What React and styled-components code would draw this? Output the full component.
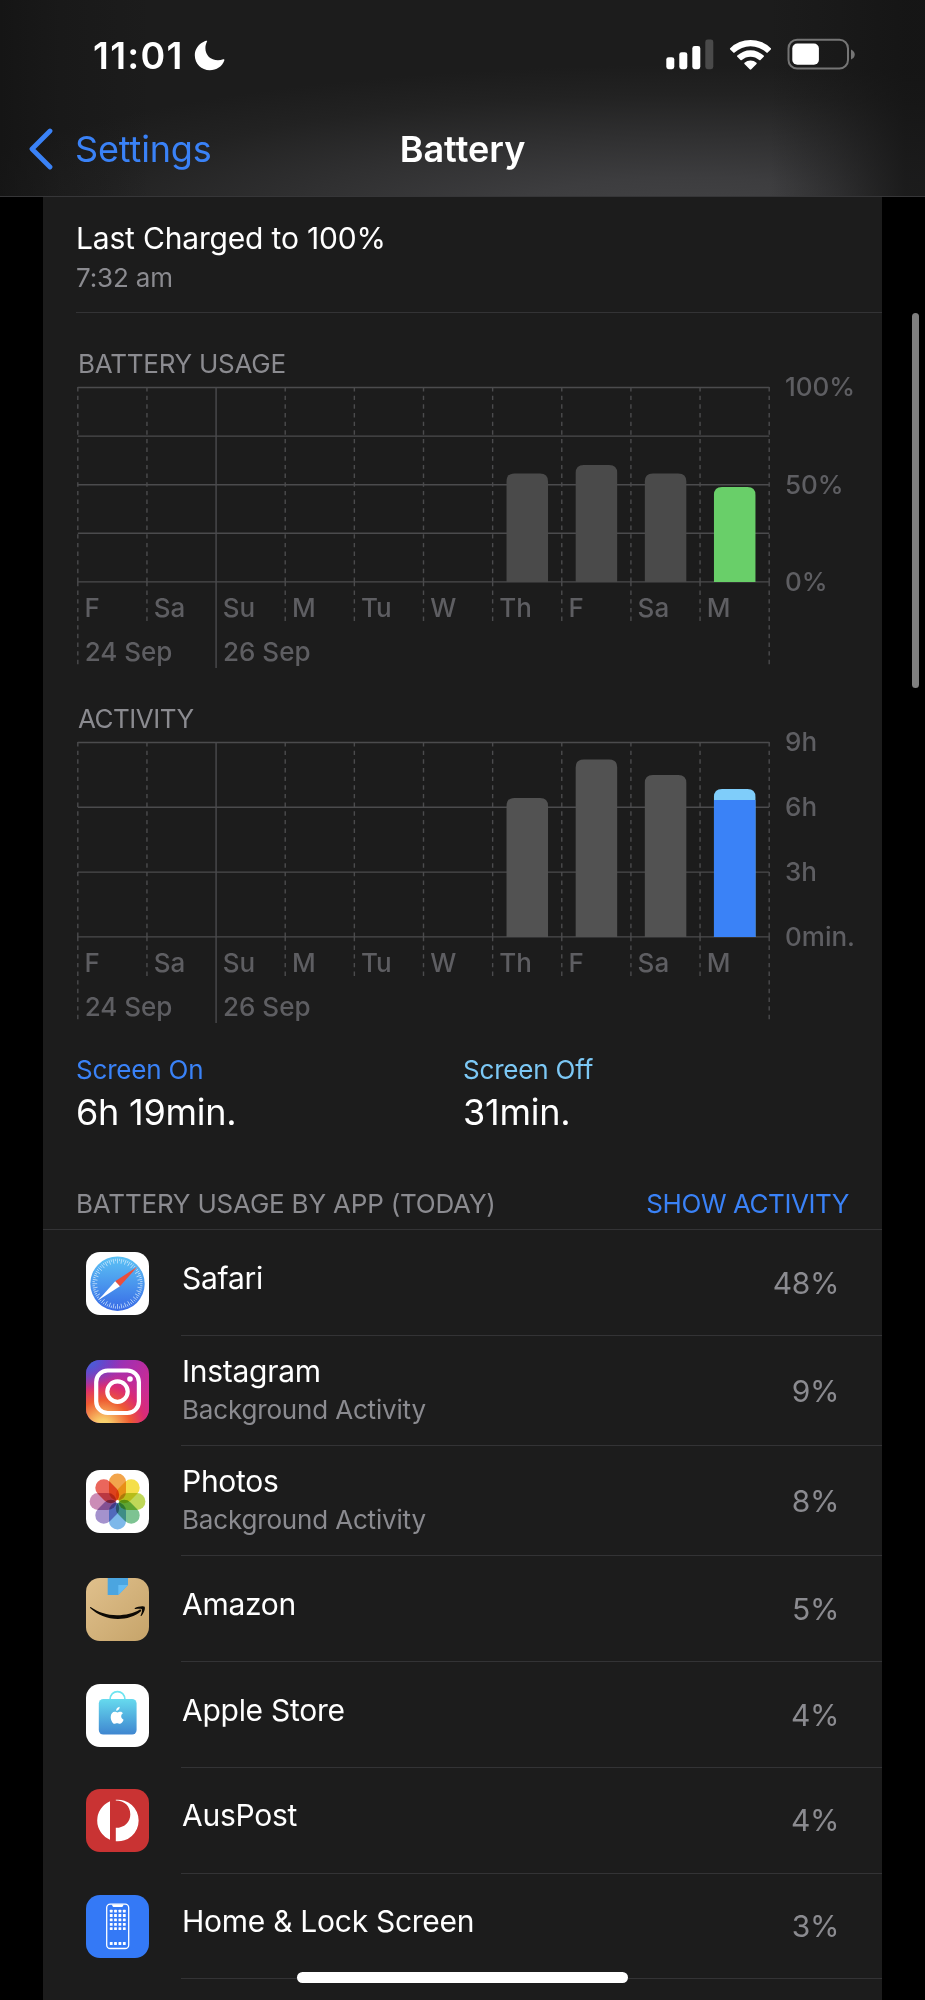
import styled, { createGlobalStyle } from "styled-components";

const colors = {
  card: "#1c1c1c",
  line: "#333335",
  grid: "#4b4b4d",
  grey: "#8b8b90",
  axis: "#5e5e62",
  blue: "#3a82f7",
  lightBlue: "#7cc8f5",
  green: "#69cf69",
};

const days = ["F", "Sa", "Su", "M", "Tu", "W", "Th", "F", "Sa", "M"];

const usageBars = [
  { day: 6, parts: [{ size: 108.5, color: "#4a4a4a" }] },
  { day: 7, parts: [{ size: 117, color: "#4a4a4a" }] },
  { day: 8, parts: [{ size: 108.5, color: "#4a4a4a" }] },
  { day: 9, parts: [{ size: 95, color: colors.green }] },
];

const activityBars = [
  { day: 6, parts: [{ size: 139, color: "#525252" }] },
  { day: 7, parts: [{ size: 177.5, color: "#525252" }] },
  { day: 8, parts: [{ size: 162, color: "#525252" }] },
  {
    day: 9,
    parts: [
      { size: 148, color: "#7fcdfa" },
      { size: 136.8, color: colors.blue },
    ],
  },
];

const apps = [
  { name: "Safari", value: "48%", icon: <SafariIcon />, height: 106 },
  { name: "Instagram", note: "Background Activity", value: "9%", icon: <InstagramIcon />, height: 110 },
  { name: "Photos", note: "Background Activity", value: "8%", icon: <PhotosIcon />, height: 110 },
  { name: "Amazon", value: "5%", icon: <AmazonIcon />, height: 106 },
  { name: "Apple Store", value: "4%", icon: <AppleStoreIcon />, height: 106 },
  { name: "AusPost", value: "4%", icon: <AusPostIcon />, height: 105.5 },
  { name: "Home & Lock Screen", value: "3%", icon: <HomeIcon />, height: 105.5 },
];

export default function App() {
  return (
    <Screen>
      <GlobalStyle />
      <Header>
        <StatusBar>
          <Clock>11:01</Clock>
          <MoonIcon />
          <Spacer />
          <StatusIcons />
        </StatusBar>
        <NavBar>
          <Back>
            <svg width="26" height="42" viewBox="0 0 26 42" fill="none">
              <path d="M22 3 L4 21 L22 39" stroke={colors.blue} strokeWidth="4.8" strokeLinecap="round" strokeLinejoin="round" />
            </svg>
            <span>Settings</span>
          </Back>
          <Title>Battery</Title>
        </NavBar>
      </Header>
      <Card>
        <LastCharged>
          <ChargedTitle>Last Charged to 100%</ChargedTitle>
          <ChargedTime>7:32 am</ChargedTime>
        </LastCharged>
        <ChartTitle>BATTERY USAGE</ChartTitle>
        <Chart rows={4} bars={usageBars} labels={["100%", "50%", "0%"]} />
        <ChartTitle $second>ACTIVITY</ChartTitle>
        <Chart rows={3} bars={activityBars} labels={["9h", "6h", "3h", "0min."]} />
        <Totals>
          <div>
            <TotalLabel $color={colors.blue}>Screen On</TotalLabel>
            <TotalValue>6h 19min.</TotalValue>
          </div>
          <div>
            <TotalLabel $color={colors.lightBlue}>Screen Off</TotalLabel>
            <TotalValue>31min.</TotalValue>
          </div>
        </Totals>
        <ListHeader>
          <span>BATTERY USAGE BY APP (TODAY)</span>
          <ShowActivity>SHOW ACTIVITY</ShowActivity>
        </ListHeader>
        {apps.map((app) => (
          <Row key={app.name} $height={app.height}>
            {app.icon}
            <RowBody>
              <RowText $single={!app.note}>
                <AppName>{app.name}</AppName>
                {app.note && <AppNote>{app.note}</AppNote>}
              </RowText>
              <Percent>{app.value}</Percent>
            </RowBody>
          </Row>
        ))}
      </Card>
      <ScrollThumb />
      <HomeIndicator />
    </Screen>
  );
}

const STEP = 69.14;
const PLOT = 194.4;

function Chart({ rows, bars, labels }) {
  const lines = Array.from({ length: rows + 1 }, (_, i) => 1.5 + (PLOT / rows) * i);
  const bottom = 1.5 + PLOT;

  return (
    <ChartRow>
      <svg width="694" height="284" viewBox="0 0 694 284">
        <g stroke={colors.grid} strokeWidth="1.4">
          {lines.map((y) => (
            <line key={y} x1="1.8" x2="693.2" y1={y} y2={y} />
          ))}
        </g>
        {Array.from({ length: 11 }, (_, i) => {
          const x = 1.8 + STEP * i;
          const solid = i === 2;
          const end = solid ? 282 : i === 0 || i === 10 ? 278.3 : 235;
          return (
            <path
              key={i}
              d={`M${x} 1 V${bottom} M${x} ${bottom} V${end}`}
              stroke={colors.grid}
              strokeWidth="1.4"
              strokeDasharray={solid ? undefined : "4.4 4.26"}
            />
          );
        })}
        {bars.map(({ day, parts }) =>
          parts.map(({ size, color }, n) => {
            const x = 1.8 + STEP * day + 13.9;
            const y = bottom - size;
            const r = n === 0 ? 8 : 0;
            return (
              <path
                key={day + color}
                d={`M${x} ${bottom} V${y + r} q0 ${-r} ${r} ${-r} H${x + 41.5 - r} q${r} 0 ${r} ${r} V${bottom} Z`}
                fill={color}
              />
            );
          })
        )}
        <AxisText>
          {days.map((d, i) => (
            <text key={i} x={8.5 + STEP * i} y="231.3">
              {d}
            </text>
          ))}
          <text x="8.7" y="274.5">24 Sep</text>
          <text x="147" y="274.5">26 Sep</text>
        </AxisText>
      </svg>
      <Scale>
        {labels.map((label) => (
          <span key={label}>{label}</span>
        ))}
      </Scale>
    </ChartRow>
  );
}

function MoonIcon() {
  return (
    <svg width="31" height="31" viewBox="0 0 31 31">
      <path d="M13 0.8 C11.6 0.8 10.6 1.3 9.3 2 C4.2 4.6 0.8 9.4 0.8 15.2 C0.8 23.7 7.4 30.2 15.8 30.2 C22.4 30.2 28.4 26.3 30.3 20.4 C30.6 19.5 30 19 29.2 19.3 C27.4 20 25.8 20.2 24 20.2 C16.6 20.2 11.4 15.2 11.4 8.2 C11.4 6 11.9 3.9 12.8 2.1 C13.1 1.5 13.4 1 13 0.8 Z" fill="#fff" />
    </svg>
  );
}

function StatusIcons() {
  return (
    <svg width="192" height="34" viewBox="0 0 192 34">
      <g fill="#fff">
        <rect x="1.3" y="19.2" width="8" height="12" rx="2.4" />
        <rect x="14.3" y="14.2" width="8" height="17" rx="2.4" />
        <rect x="27.3" y="8" width="8" height="23.2" rx="2.4" />
        <rect x="40.3" y="1.5" width="8" height="29.7" rx="2.4" fill="#4a4a4a" />
      </g>
      <g transform="translate(85.5 31)" fill="#fff">
        <path d="M-20.3 -20.8 A29.2 29.2 0 0 1 20.3 -20.8 Q20.9 -20.2 20.3 -19.6 L17.2 -16.4 Q16.6 -15.8 15.9 -16.4 A23.1 23.1 0 0 0 -15.9 -16.4 Q-16.6 -15.8 -17.2 -16.4 L-20.3 -19.6 Q-20.9 -20.2 -20.3 -20.8 Z" />
        <path d="M-13.2 -13.4 A19 19 0 0 1 13.2 -13.4 Q13.8 -12.8 13.2 -12.2 L10 -9 Q9.4 -8.4 8.7 -9 A13 13 0 0 0 -8.7 -9 Q-9.4 -8.4 -10 -9 L-13.2 -12.2 Q-13.8 -12.8 -13.2 -13.4 Z" />
        <path d="M-6 -6.2 A9.2 9.2 0 0 1 6 -6.2 Q6.6 -5.6 6 -5 L0.8 0.3 Q0 1 -0.8 0.3 L-6 -5 Q-6.6 -5.6 -6 -6.2 Z" />
      </g>
      <rect x="123.5" y="1.8" width="59.5" height="28.8" rx="8.6" fill="none" stroke="#757575" strokeWidth="2" />
      <rect x="127.3" y="5.6" width="26.6" height="21.2" rx="5" fill="#fff" />
      <path d="M186 11.4 C191 13.4 191 19.4 186 21.4 Z" fill="#757575" />
    </svg>
  );
}

function SafariIcon() {
  const ticks = Array.from({ length: 72 }, (_, i) => i * 5);
  return (
    <Icon>
      <defs>
        <linearGradient id="safari" x1="0" y1="0" x2="0" y2="1">
          <stop offset="0" stopColor="#5cc3f5" />
          <stop offset="1" stopColor="#386ae6" />
        </linearGradient>
      </defs>
      <rect width="63" height="63" fill="#fff" />
      <circle cx="31.5" cy="31.7" r="27.2" fill="url(#safari)" />
      <g stroke="#d5eafc" strokeWidth="0.7">
        {ticks.map((a, i) => (
          <line key={a} x1="31.5" x2="31.5" y1="6.6" y2={i % 2 ? 9 : 11.4} transform={`rotate(${a} 31.5 31.7)`} />
        ))}
      </g>
      <path d="M51.5 14.6 L33.9 34.3 L29.2 29.2 Z" fill="#ea4e3d" />
      <path d="M12.2 48.3 L29.2 29.2 L33.9 34.3 Z" fill="#fff" />
    </Icon>
  );
}

function InstagramIcon() {
  return (
    <Icon>
      <defs>
        <linearGradient id="igBase" x1="0" y1="0" x2="1" y2="0.6">
          <stop offset="0" stopColor="#5b45d0" />
          <stop offset="0.5" stopColor="#a42fb0" />
          <stop offset="1" stopColor="#d42a8c" />
        </linearGradient>
        <radialGradient id="igWarm" cx="0.27" cy="1.07" r="0.98">
          <stop offset="0" stopColor="#fbd975" />
          <stop offset="0.12" stopColor="#f9cf6b" />
          <stop offset="0.45" stopColor="#ee5b32" />
          <stop offset="0.68" stopColor="#dc2c72" />
          <stop offset="1" stopColor="#c22d9c" stopOpacity="0" />
        </radialGradient>
        <radialGradient id="igCool" cx="0.05" cy="0" r="0.5">
          <stop offset="0" stopColor="#4265dc" />
          <stop offset="1" stopColor="#6b3fca" stopOpacity="0" />
        </radialGradient>
      </defs>
      <rect width="63" height="63" fill="url(#igBase)" />
      <rect width="63" height="63" fill="url(#igWarm)" />
      <rect width="63" height="63" fill="url(#igCool)" />
      <g fill="none" stroke="#fff" strokeWidth="4.2">
        <rect x="10.2" y="10.5" width="42.7" height="42.5" rx="11.5" />
        <circle cx="31.5" cy="31.6" r="10.2" />
      </g>
      <circle cx="44" cy="19" r="2.8" fill="#fff" />
    </Icon>
  );
}

const petals = ["#f19b38", "#f4dc35", "#b8d446", "#6fbd86", "#6fb0e8", "#9a86c8", "#c67fae", "#e8554a"];

function PhotosIcon() {
  return (
    <Icon>
      <rect width="63" height="63" fill="#fff" />
      <g>
        {petals.map((color, i) => (
          <Petal key={color} x="23" y="3.6" width="17" height="26.8" rx="8.5" fill={color} transform={`rotate(${i * 45} 31.5 31.5)`} />
        ))}
      </g>
      <circle cx="31.5" cy="31.5" r="1.6" fill="#fff" />
    </Icon>
  );
}

function AmazonIcon() {
  return (
    <Icon>
      <defs>
        <linearGradient id="amazon" x1="0" y1="0" x2="1" y2="1">
          <stop offset="0" stopColor="#e0c08c" />
          <stop offset="1" stopColor="#c6a46a" />
        </linearGradient>
      </defs>
      <rect width="63" height="63" fill="url(#amazon)" />
      <path d="M21.7 0 H42 V7 L32.3 17 H21.7 Z" fill="#4ba5e0" />
      <path d="M32.3 17 V7 H42 Z" fill="#65bdf3" />
      <path d="M4.6 29 C12 34.3 21 37.2 31 37.2 C39.5 37.2 48 35 53.5 31.7 C55 31 56 32.5 54.7 33.5 C49 38.3 40.5 41 32 41 C21 41 11.5 36.6 4.4 30.2 C3.8 29.6 4 28.7 4.6 29 Z" fill="#0d0a05" />
      <path d="M49 30 C51.5 28.4 57.5 27.6 58.6 28.8 C59.7 30.2 57.8 35.6 55.6 37.8 C54.9 38.4 54.3 38 54.7 37.2 C55.6 35 56.5 32 55.8 31.2 C55.1 30.4 52 30.7 49.6 31 C48.6 31.1 48.4 30.4 49 30 Z" fill="#0d0a05" />
    </Icon>
  );
}

function AppleStoreIcon() {
  return (
    <Icon>
      <defs>
        <linearGradient id="bag" x1="0" y1="0" x2="0" y2="1">
          <stop offset="0" stopColor="#66daee" />
          <stop offset="1" stopColor="#3f86d0" />
        </linearGradient>
      </defs>
      <rect width="63" height="63" fill="#fff" />
      <path d="M24 16 C24 4.8 39 4.8 39 16" fill="none" stroke="#6fe4f0" strokeWidth="1.7" />
      <rect x="12.8" y="15" width="37.8" height="35.6" rx="4.5" fill="url(#bag)" />
      <g transform="translate(24.7 22.8) scale(0.82)" fill="#fff">
        <path d="M11 0 C11.2 2.6 9 5 6.6 4.9 C6.4 2.4 8.6 0.2 11 0 Z" />
        <path d="M14.9 8 C11.7 10 12.3 14.4 15.7 15.7 C15 17.8 12.9 20.8 11 20.8 C9.7 20.8 9.4 20 7.8 20 C6.2 20 5.7 20.8 4.5 20.8 C2.4 20.8 0 16.2 0 12.4 C0 8.4 2.5 6 4.9 6 C6.4 6 7.2 6.9 8.4 6.9 C9.5 6.9 10.3 6 12 6 C13.2 6 14.3 6.8 14.9 8 Z" />
      </g>
    </Icon>
  );
}

function AusPostIcon() {
  return (
    <Icon>
      <rect width="63" height="63" fill="#c93333" />
      <path d="M24 12.3 A20.8 20.8 0 0 0 24 50.7 Z" fill="#fff" />
      <path d="M29.8 10.8 A20.8 20.8 0 1 1 29.8 52.2 V38.8 C38.5 38.8 44.3 33 44.3 25.4 C44.3 17 38.3 11.8 29.8 11.6 Z" fill="#fff" />
    </Icon>
  );
}

function HomeIcon() {
  const dots = [16, 20.4, 24.8, 29.2, 33.6, 48.4];
  return (
    <Icon>
      <rect width="63" height="63" fill="#3479f6" />
      <rect x="20.7" y="9.2" width="22" height="44.3" rx="3.6" fill="none" stroke="#fff" strokeWidth="1.3" />
      <path d="M26 9.5 H37.5 C37 11.4 36.5 12 35.4 12 H28 C27 12 26.4 11.4 26 9.5 Z" fill="#fff" />
      <g fill="#fff">
        {dots.map((y) =>
          [25.2, 29.5, 33.9, 38.3].map((x) => (
            <rect key={x} x={x - 1.4} y={y - 1.3} width="2.8" height="2.8" rx="0.5" />
          ))
        )}
      </g>
    </Icon>
  );
}

const GlobalStyle = createGlobalStyle`
  body {
    margin: 0;
    background: #000;
    font-family: Inter, "Liberation Sans", sans-serif;
    color: #fff;
  }

  svg {
    display: block;
    flex: none;
  }
`;

const Screen = styled.div`
  position: relative;
  width: 925px;
  height: 2000px;
  overflow: hidden;
  background: #000;
`;

const Header = styled.header`
  box-sizing: border-box;
  height: 197px;
  padding-top: 31px;
  border-bottom: 1px solid #363638;
  background:
    linear-gradient(90deg, rgba(18, 18, 18, 0.7) 0, rgba(18, 18, 18, 0.3) 60px, rgba(18, 18, 18, 0) 150px, rgba(18, 18, 18, 0) 770px, rgba(20, 20, 20, 0.35) 835px, rgba(20, 20, 20, 0.8) 905px),
    radial-gradient(ellipse 760px 150px at 690px 215px, #434345 0%, #3d3d3f 25%, #303031 52%, #222222 80%, #1c1c1c 100%);
`;

const StatusBar = styled.div`
  display: flex;
  align-items: center;
  height: 48px;
  padding: 0 68px 0 93px;
`;

const Clock = styled.span`
  width: 101px;
  font-size: 37.5px;
  font-weight: 600;
  letter-spacing: 1.3px;
  white-space: nowrap;
`;

const Spacer = styled.div`
  flex: 1;
`;

const NavBar = styled.nav`
  display: grid;
  grid-template-columns: 1fr auto 1fr;
  align-items: center;
  height: 48px;
  margin-top: 46px;
`;

const Back = styled.div`
  display: flex;
  align-items: center;
  gap: 21px;
  padding-left: 28px;
  font-size: 36px;
  letter-spacing: -0.15px;
  color: ${colors.blue};
`;

const Title = styled.h1`
  margin: 0;
  font-size: 36px;
  font-weight: 600;
  letter-spacing: 0;
`;

const Card = styled.main`
  width: 839px;
  height: 1803px;
  margin-left: 43px;
  background: ${colors.card};
`;

const LastCharged = styled.section`
  box-sizing: border-box;
  height: 116px;
  margin-left: 33px;
  padding-top: 22px;
  border-bottom: 1px solid ${colors.line};
`;

const ChargedTitle = styled.div`
  font-size: 30px;
  line-height: 38px;
  letter-spacing: -0.18px;
`;

const ChargedTime = styled.div`
  margin-top: 5px;
  font-size: 26px;
  line-height: 32px;
  letter-spacing: -0.15px;
  color: ${colors.grey};
`;

const ChartTitle = styled.h2`
  height: 32px;
  margin: ${(p) => (p.$second ? "32px" : "35px")} 0 0 35px;
  padding-bottom: 6px;
  font-size: 26px;
  font-weight: 400;
  line-height: 32px;
  letter-spacing: ${(p) => (p.$second ? "-0.5px" : "-0.25px")};
  color: ${colors.grey};
`;

const ChartRow = styled.div`
  display: flex;
  gap: 15px;
  height: 285px;
  padding-left: 33px;
`;

const AxisText = styled.g`
  fill: ${colors.axis};
  font-size: 26px;
  font-weight: 500;
`;

const Scale = styled.div`
  display: flex;
  flex-direction: column;
  justify-content: space-between;
  height: 227px;
  margin-top: -15px;
  font-size: 26px;
  font-weight: 500;
  line-height: 32px;
  color: ${colors.axis};
`;

const Totals = styled.section`
  display: grid;
  grid-template-columns: 387px 1fr;
  padding: 28px 0 0 33px;
`;

const TotalLabel = styled.div`
  font-size: 26px;
  line-height: 32px;
  letter-spacing: -0.18px;
  color: ${(p) => p.$color};
`;

const TotalValue = styled.div`
  margin-top: 4px;
  font-size: 36px;
  line-height: 44px;
  letter-spacing: -0.25px;
`;

const ListHeader = styled.div`
  box-sizing: border-box;
  display: flex;
  justify-content: space-between;
  height: 96px;
  padding: 54px 33px 0 33px;
  border-bottom: 1px solid ${colors.line};
  font-size: 26px;
  line-height: 32px;
  letter-spacing: -0.2px;
  color: ${colors.grey};
`;

const ShowActivity = styled.span`
  letter-spacing: -0.45px;
  color: ${colors.blue};
`;

const Row = styled.div`
  display: flex;
  align-items: center;
  height: ${(p) => p.$height}px;
  padding-left: 43px;
`;

const Icon = styled.svg.attrs({ viewBox: "0 0 63 63" })`
  width: 63px;
  height: 63px;
  border-radius: 14px;
`;

const Petal = styled.rect`
  mix-blend-mode: multiply;
  opacity: 0.9;
`;

const RowBody = styled.div`
  box-sizing: border-box;
  flex: 1;
  display: flex;
  align-items: center;
  justify-content: space-between;
  height: 100%;
  margin-left: 32px;
  padding-right: 43px;
  border-bottom: 1px solid ${colors.line};
`;

const RowText = styled.div`
  padding-left: 1px;
  padding-bottom: ${(p) => (p.$single ? "10px" : "4px")};
`;

const AppName = styled.div`
  font-size: 30px;
  line-height: 38px;
  letter-spacing: -0.27px;
`;

const AppNote = styled.div`
  margin-top: 4px;
  font-size: 26px;
  line-height: 32px;
  letter-spacing: -0.17px;
  color: ${colors.grey};
`;

const Percent = styled.span`
  font-size: 30px;
  letter-spacing: -0.4px;
  color: ${colors.grey};
`;

const ScrollThumb = styled.div`
  position: absolute;
  top: 313px;
  right: 6px;
  width: 7px;
  height: 375px;
  border-radius: 4px;
  background: #7f7f7f;
`;

const HomeIndicator = styled.div`
  position: absolute;
  bottom: 17px;
  left: 297px;
  width: 331px;
  height: 11px;
  border-radius: 6px;
  background: #fff;
`;
